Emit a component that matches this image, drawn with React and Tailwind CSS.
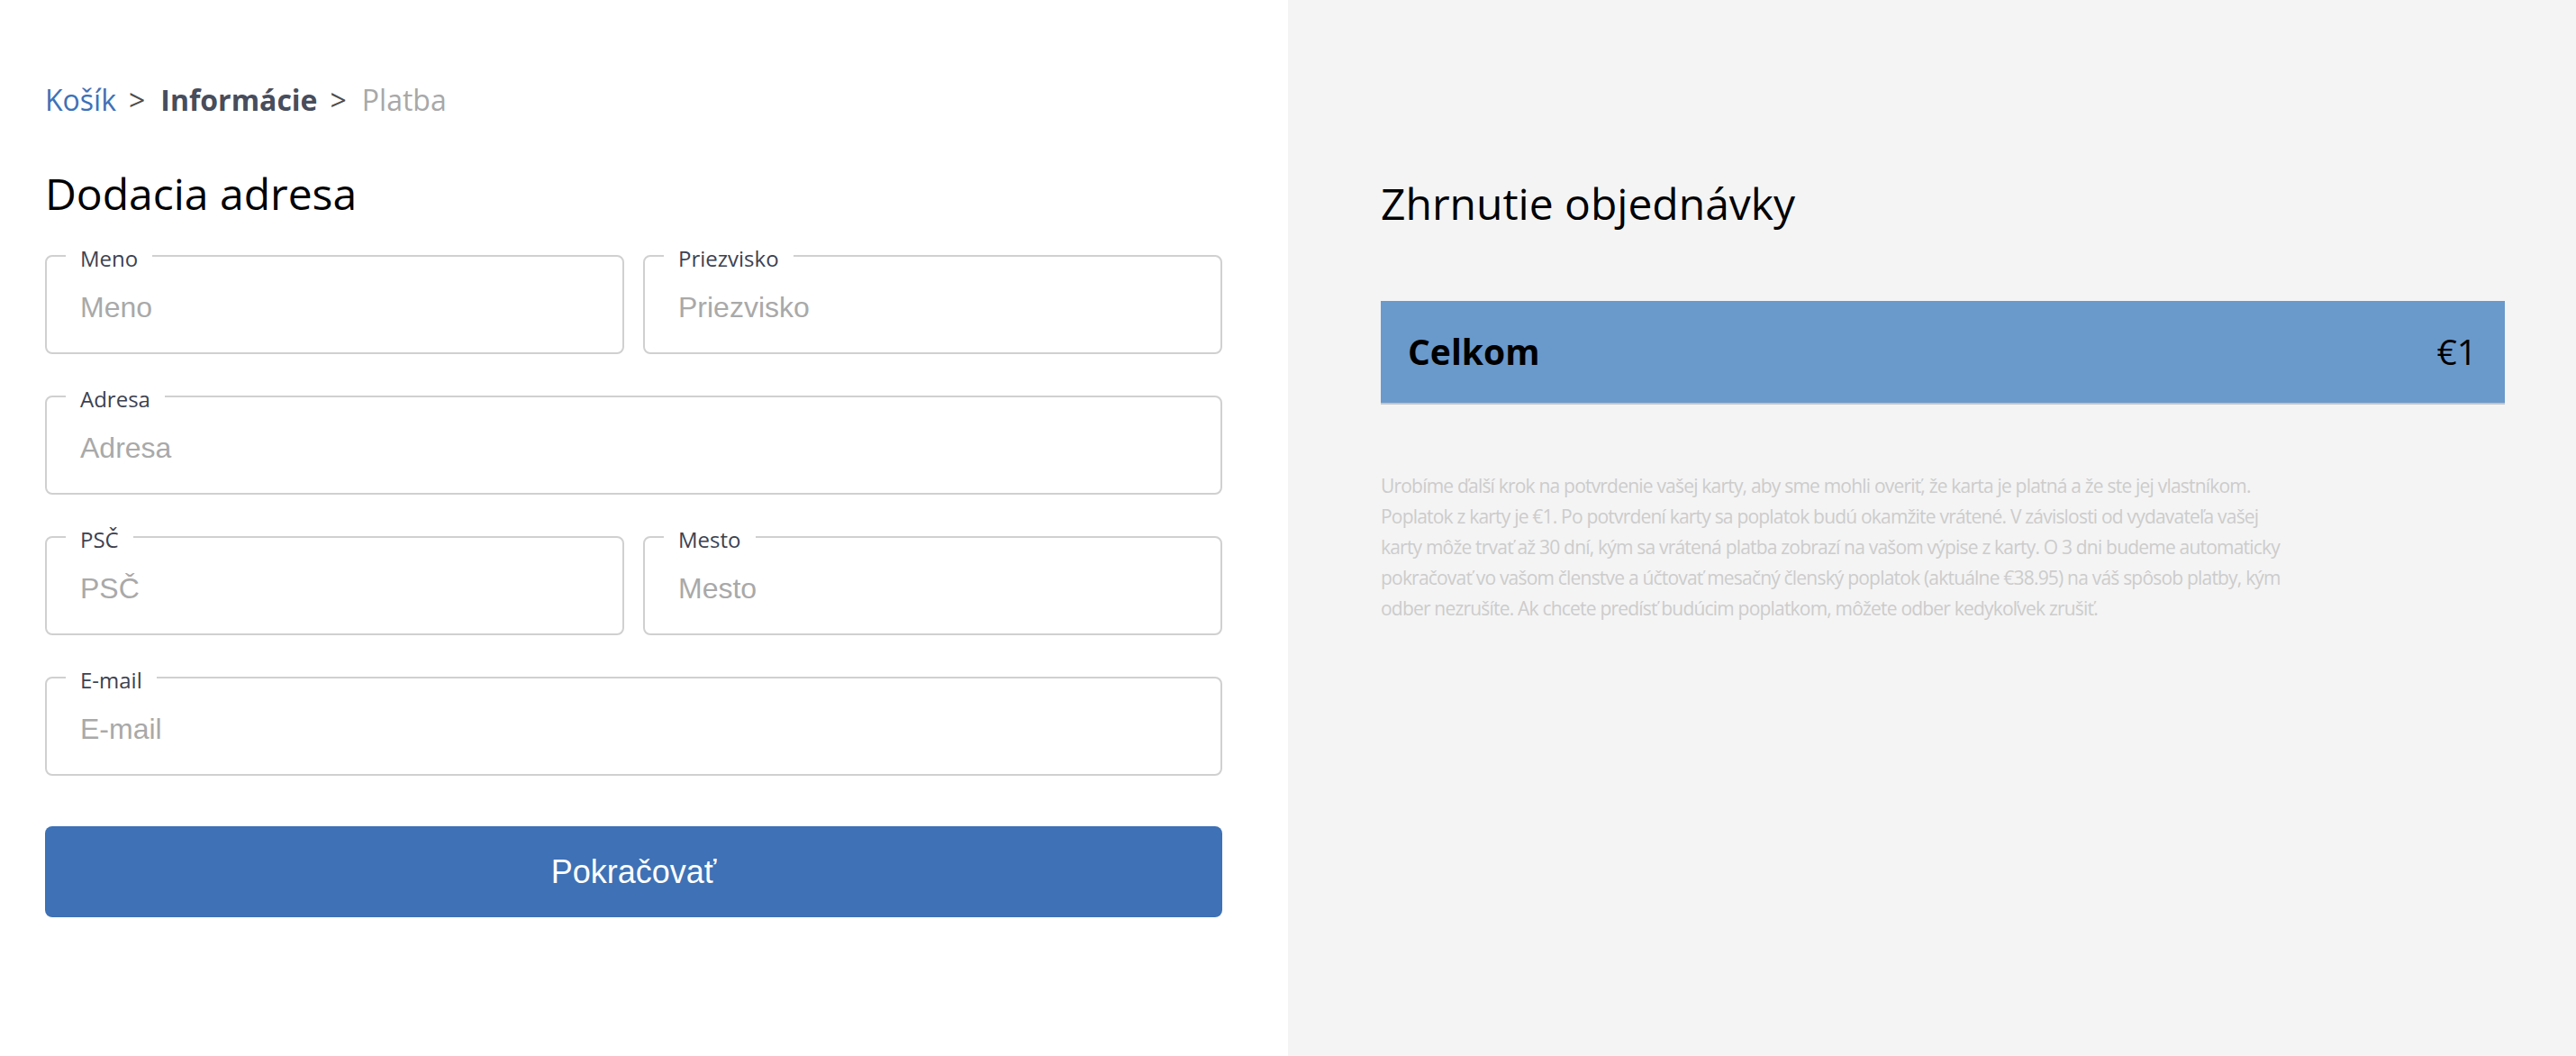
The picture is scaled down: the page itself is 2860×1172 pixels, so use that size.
function Field({ label, className = '' }) {
  return (
    <fieldset className={`border-2 border-[#d0d0d0] rounded-[8px] pl-[21px] pr-[21px] pb-[21px] ${className}`}>
      <legend className="px-[16px] text-[24px] leading-[32px] text-[#3c4251] font-['Open_Sans',sans-serif]">
        <span className="relative top-[3px]">{label}</span>
      </legend>
      <input
        type="text"
        placeholder={label}
        className="mt-[12px] h-[58px] w-full pl-[16px] bg-transparent outline-none text-[32px] text-[#222] placeholder:text-[#a9a9a9] font-['Liberation_Sans',Arial,sans-serif]"
      />
    </fieldset>
  )
}

export default function App() {
  return (
    <div className="min-h-screen flex font-['Open_Sans',sans-serif]">
      <div className="w-1/2 bg-white pl-[50px] pr-[73px] pt-[88px]">
        <nav className="flex items-center text-[32px] leading-[45px]">
          <span className="text-[#3d72b8]">Košík</span>
          <span className="ml-[14px] mr-[17px] text-[#4d4d4d]">&gt;</span>
          <span className="font-bold text-[#474d5c]">Informácie</span>
          <span className="ml-[14px] mr-[17px] text-[#4d4d4d]">&gt;</span>
          <span className="text-[#a8a8a8]">Platba</span>
        </nav>

        <h2 className="mt-[54px] text-[48px] leading-[55px] text-black">Dodacia adresa</h2>

        <form className="mt-[26px] flex flex-col gap-[31px]" onSubmit={(e) => e.preventDefault()}>
          <div className="grid grid-cols-2 gap-[21px]">
            <Field label="Meno" />
            <Field label="Priezvisko" />
          </div>
          <Field label="Adresa" />
          <div className="grid grid-cols-2 gap-[21px]">
            <Field label="PSČ" />
            <Field label="Mesto" />
          </div>
          <Field label="E-mail" />

          <button
            type="submit"
            className="mt-[25px] h-[101px] w-full rounded-[8px] bg-[#3e71b5] text-white text-[36px] font-['Liberation_Sans',Arial,sans-serif]"
          >
            Pokračovať
          </button>
        </form>
      </div>

      <div className="w-1/2 bg-[#f4f4f4] pl-[103px] pr-[79px] pt-[197px]">
        <h2 className="text-[48px] leading-[58px] text-black">Zhrnutie objednávky</h2>

        <div className="mt-[79px] h-[115px] flex items-center justify-between bg-[#6a99cc] border-b-2 border-[#c4c4c4] pl-[30px] pr-[31px] text-[39px] text-black">
          <span className="font-bold">Celkom</span>
          <span>€1</span>
        </div>

        <p className="mt-[73px] w-[1080px] text-[21px] leading-[34px] tracking-[-0.8px] text-[#cccccc]">
          Urobíme ďalší krok na potvrdenie vašej karty, aby sme mohli overiť, že karta je platná a že ste jej vlastníkom.
          <br />
          Poplatok z karty je €1. Po potvrdení karty sa poplatok budú okamžite vrátené. V závislosti od vydavateľa vašej
          <br />
          karty môže trvať až 30 dní, kým sa vrátená platba zobrazí na vašom výpise z karty. O 3 dni budeme automaticky
          <br />
          pokračovať vo vašom členstve a účtovať mesačný členský poplatok (aktuálne €38.95) na váš spôsob platby, kým
          <br />
          odber nezrušíte. Ak chcete predísť budúcim poplatkom, môžete odber kedykoľvek zrušiť.
        </p>
      </div>
    </div>
  )
}
